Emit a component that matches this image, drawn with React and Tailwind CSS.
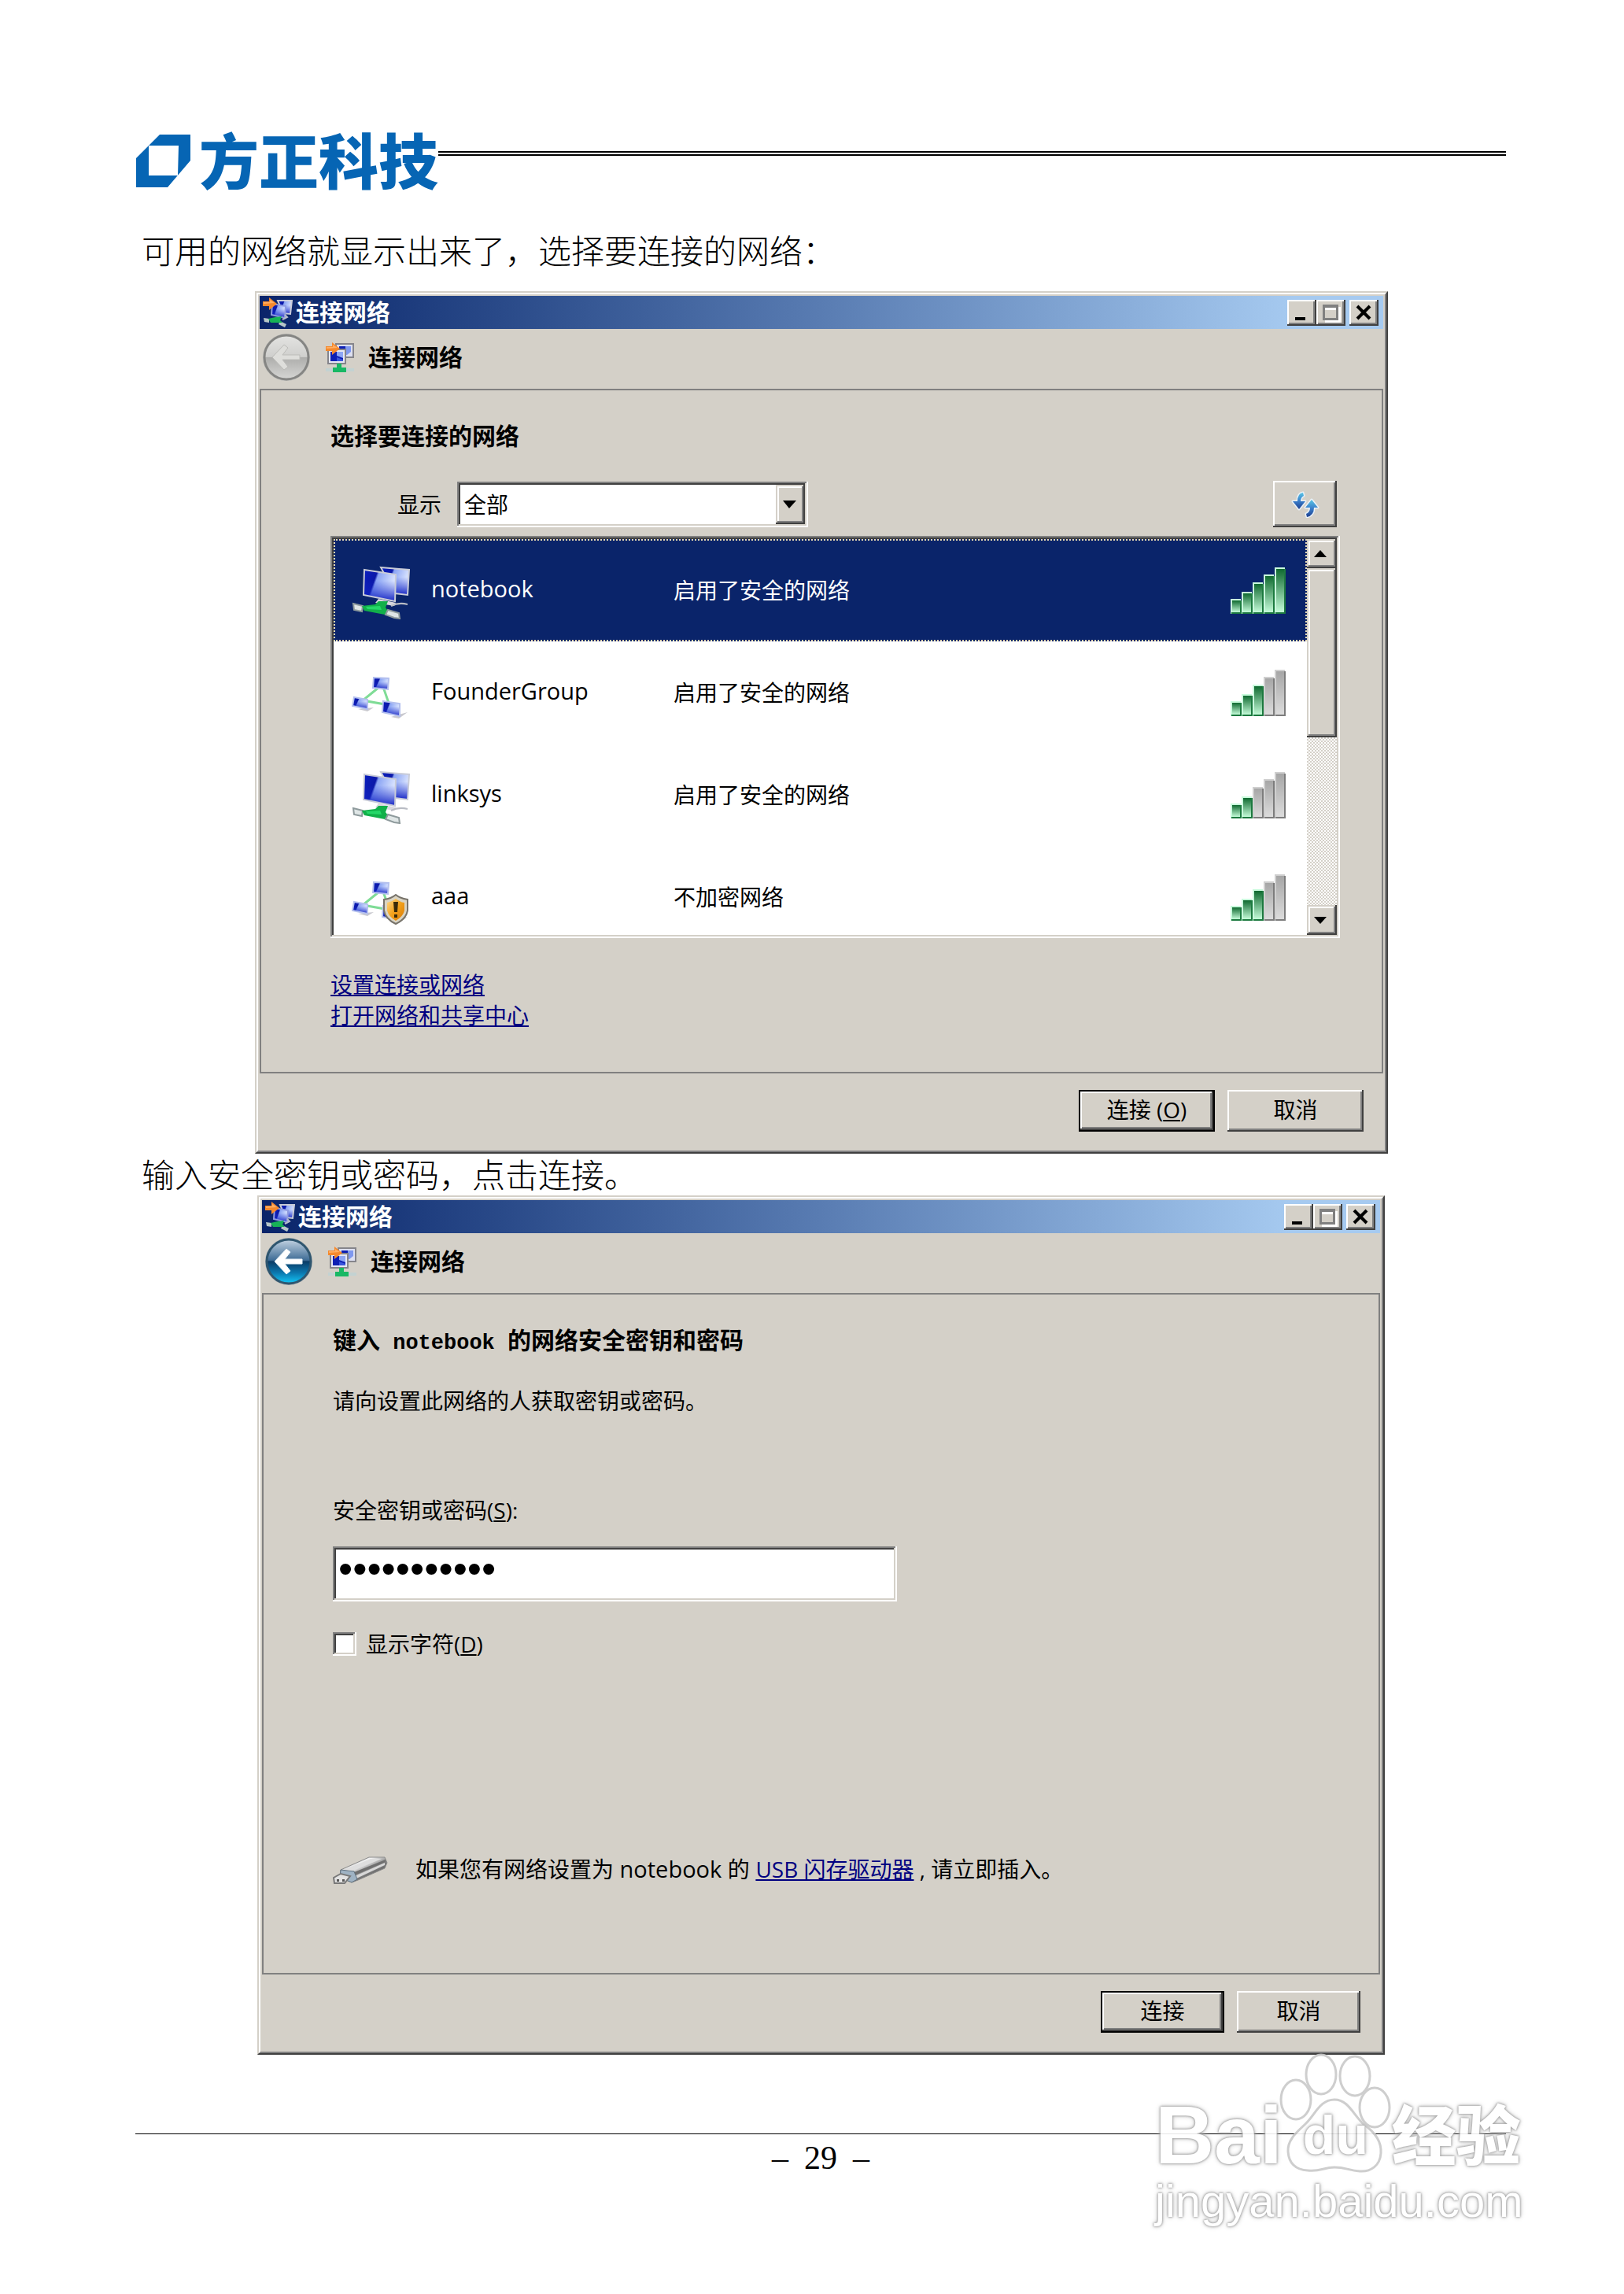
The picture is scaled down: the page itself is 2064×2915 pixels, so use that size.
import { useState } from "react";
import clsx from "clsx";

const RAISED =
  "bg-[#d4d0c8] shadow-[inset_-2px_-2px_0_#404040,inset_2px_2px_0_#fff,inset_-4px_-4px_0_#808080]";
const RAISED_SOFT =
  "bg-[#d4d0c8] shadow-[inset_-2px_-2px_0_#404040,inset_2px_2px_0_#d4d0c8,inset_-4px_-4px_0_#808080,inset_4px_4px_0_#fff]";
const SUNKEN =
  "bg-white shadow-[inset_-2px_-2px_0_#fff,inset_2px_2px_0_#808080,inset_-4px_-4px_0_#d4d0c8,inset_4px_4px_0_#404040]";

const networks = [
  { name: "notebook", security: "启用了安全的网络", icon: "infra", bars: 5 },
  { name: "FounderGroup", security: "启用了安全的网络", icon: "adhoc", bars: 3 },
  { name: "linksys", security: "启用了安全的网络", icon: "infra", bars: 2 },
  { name: "aaa", security: "不加密网络", icon: "adhoc-open", bars: 3 },
];

// Gradients shared by every icon on the page
const IconDefs = () => (
  <svg width="0" height="0" className="absolute" aria-hidden="true">
    <defs>
      <linearGradient id="screen" x1="0" y1="0" x2="1" y2="0.35">
        <stop offset="0" stopColor="#0a1fc0" />
        <stop offset="0.4" stopColor="#0b18a8" />
        <stop offset="0.46" stopColor="#8aa4f4" />
        <stop offset="1" stopColor="#dfe8ff" />
      </linearGradient>
      <linearGradient id="screenFade" x1="0" y1="0" x2="0" y2="1">
        <stop offset="0.35" stopColor="#1a2fd0" stopOpacity="0" />
        <stop offset="1" stopColor="#0c1cc0" stopOpacity="0.95" />
      </linearGradient>
      <linearGradient id="barOn" x1="0" y1="0" x2="0" y2="1">
        <stop offset="0" stopColor="#0f6a30" />
        <stop offset="1" stopColor="#c4fbd8" />
      </linearGradient>
      <linearGradient id="barOff" x1="0" y1="0" x2="0" y2="1">
        <stop offset="0" stopColor="#a6a6a6" />
        <stop offset="1" stopColor="#dcdcdc" />
      </linearGradient>
      <linearGradient id="backOff" x1="0" y1="0" x2="0" y2="1">
        <stop offset="0" stopColor="#e4e4e2" />
        <stop offset="0.49" stopColor="#cfcfcd" />
        <stop offset="0.5" stopColor="#adadab" />
        <stop offset="1" stopColor="#d6d6d4" />
      </linearGradient>
      <linearGradient id="backOn" x1="0" y1="0" x2="0" y2="1">
        <stop offset="0" stopColor="#c3d3e2" />
        <stop offset="0.47" stopColor="#3f6d96" />
        <stop offset="0.5" stopColor="#0b3c66" />
        <stop offset="0.75" stopColor="#0b76ad" />
        <stop offset="1" stopColor="#14c8f8" />
      </linearGradient>
      <linearGradient id="shield" x1="0" y1="0" x2="1" y2="1">
        <stop offset="0" stopColor="#ffd98a" />
        <stop offset="0.5" stopColor="#f2a11c" />
        <stop offset="1" stopColor="#d97a06" />
      </linearGradient>
      <linearGradient id="arrowBlue" x1="0" y1="0" x2="0" y2="1">
        <stop offset="0" stopColor="#58c4e4" />
        <stop offset="0.5" stopColor="#3a7fcb" />
        <stop offset="1" stopColor="#1d3f8f" />
      </linearGradient>
      <linearGradient id="metal" x1="0" y1="0" x2="1" y2="1">
        <stop offset="0" stopColor="#8d8d8d" />
        <stop offset="0.35" stopColor="#f4f4f4" />
        <stop offset="0.6" stopColor="#7a7a7a" />
        <stop offset="1" stopColor="#3f3f3f" />
      </linearGradient>
    </defs>
  </svg>
);

const Monitor = ({ points, frame = "#c9ccd8" }) => (
  <>
    <polygon points={points} fill="url(#screen)" />
    <polygon points={points} fill="url(#screenFade)" />
    <polygon points={points} fill="none" stroke={frame} strokeWidth="2" />
  </>
);

const InfraIcon = () => (
  <svg viewBox="0 0 74 74" className="w-[74px] h-[74px]" aria-hidden="true">
    <Monitor points="37,8 73,11 71,43 55,41" />
    <Monitor points="16,11 56,17 55,51 15,43" />
    <path d="M34 48 L56 53 L54 57 L30 53Z" fill="#d8d8de" />
    <path d="M50 57 Q60 52 71 55" stroke="#b9bcc4" strokeWidth="2" fill="none" />
    <path d="M2 54 L14 57 L13 64 L3 62Z" fill="#dfe6e6" stroke="#8e9a9c" strokeWidth="2" />
    <path d="M13 57 L30 55 L34 51 L46 51 L43 59 L46 63 L42 68 L16 63Z" fill="#12b04a" />
    <path d="M18 58 L36 57 L38 62 L20 61Z" fill="#25d868" />
    <path d="M46 62 L60 66 L61 73 L54 72 L43 68Z" fill="#dfe6e6" stroke="#8e9a9c" strokeWidth="2" />
  </svg>
);

const AdhocIcon = ({ open }) => (
  <svg viewBox="0 0 74 74" className="w-[74px] h-[74px]" aria-hidden="true">
    <path d="M35 30 L14 47 L48 53 L40 30" stroke="#7fdc96" strokeWidth="3" fill="none" />
    <path d="M8 58 L28 56 L20 61Z M50 68 L71 62 L60 70Z" fill="#c9c9cf" />
    <Monitor points="28,18 47,19 46,33 27,31" frame="#b4c0ee" />
    <Monitor points="3,43 20,46 20,58 1,54" frame="#b4c0ee" />
    <Monitor points="40,48 61,51 61,67 39,62" frame="#b4c0ee" />
    {open && (
      <g>
        <path
          d="M56 34 Q62 39 71 40 V54 Q69 65 56 71 Q43 65 41 54 V40 Q50 39 56 34Z"
          fill="#d9d4c4"
          stroke="#77736a"
          strokeWidth="2"
        />
        <path d="M56 39 Q61 43 67 44 V54 Q65 62 56 67 Q47 62 45 54 V44 Q51 43 56 39Z" fill="url(#shield)" />
        <path d="M53 43 H59 L58 56 H54Z M54 59 H58 V63 H54Z" fill="#3a2a08" />
      </g>
    )}
  </svg>
);

const ConnectIcon = ({ tilted }) => (
  <svg viewBox="0 0 38 38" className="w-[38px] h-[38px]" aria-hidden="true">
    {tilted ? (
      <>
        <Monitor points="19,4 37,4 35,21 26,20" />
        <Monitor points="12,8 29,11 28,26 11,22" frame="#8f9be0" />
        <path d="M28 22 L31 25 L25 28" stroke="#b7bccb" strokeWidth="2" fill="none" />
        <path d="M1 26 L8 27 L8 32 L2 31Z M22 30 L30 34 L28 38 L20 34Z" fill="#b7c6c8" />
        <path d="M7 27 L16 25 L24 24 L22 29 L25 32 L10 32Z" fill="#17b356" />
      </>
    ) : (
      <>
        <path d="M13 2 H35 V19 H13Z" fill="#dcdff0" stroke="#85858b" strokeWidth="2" />
        <path d="M17 5 H25 V16 H17Z" fill="#0d1fb4" />
        <path d="M25 5 H32 V12 L27 16 H25Z" fill="#7f98ee" />
        <path d="M3 9 H25 V27 H3Z" fill="#e6e8f4" stroke="#85858b" strokeWidth="2" />
        <path d="M6 12 H22 V24 H6Z" fill="#0d1fb4" />
        <path d="M14 12 H22 V20 L14 17Z" fill="#8ea6f4" />
        <path d="M14 19 L22 22 V24 H14Z" fill="#3a55dc" />
        <rect x="0" y="33" width="36" height="4" fill="#c3d2d2" />
        <path d="M14 27 H20 V32 H26 V38 H9 V32 H14Z" fill="#18b864" />
      </>
    )}
    <path d="M0 5 H8 V0 L18 8 L8 16 V11 H0Z" fill="#f5892d" />
    <path d="M1 6 H9 V3 L15 7 L1 8Z" fill="#ffae62" />
  </svg>
);

const BackIcon = ({ active }) => (
  <svg viewBox="0 0 62 62" className="w-[62px] h-[62px]" aria-hidden="true">
    <circle cx="31" cy="31" r="30" fill={active ? "#a9aeb0" : "#bdbdba"} />
    <circle
      cx="31"
      cy="31"
      r="28"
      fill={active ? "url(#backOn)" : "url(#backOff)"}
      stroke={active ? "#2f566f" : "#858583"}
      strokeWidth="3"
    />
    <path
      d="M28 15 L13 31 L28 47 L33 43 L26 34 H48 V28 H26 L33 19Z"
      fill={active ? "#fff" : "#dededb"}
      stroke={active ? "#e8f2f8" : "#bcbcb9"}
      strokeWidth="1"
      strokeLinejoin="round"
    />
  </svg>
);

const RefreshIcon = () => (
  <svg viewBox="0 0 36 34" className="w-9 h-[34px]" aria-hidden="true">
    <g stroke="#e9f1f8" strokeWidth="3" strokeLinejoin="round" paintOrder="stroke" fill="url(#arrowBlue)">
      <path d="M15 2 Q8 3 8 13 H2 L10 23 L18 13 H12 Q12 8 16 6Z" />
      <path d="M20 33 Q29 31 29 21 H34 L26 11 L18 21 H24 Q24 27 19 29Z" />
    </g>
  </svg>
);

const UsbIcon = () => (
  <svg viewBox="0 0 70 36" className="w-[70px] h-9" aria-hidden="true">
    <path d="M10 17 L46 1 L66 1 L69 8 L66 15 L32 30 L24 33 L9 25Z" fill="url(#metal)" stroke="#8a8a8a" />
    <path d="M14 17 L48 3 L62 3 L26 18Z" fill="#dedede" />
    <path d="M27 20 L67 4 L67 7 L28 24Z" fill="#6f6f6f" />
    <path d="M28 25 L66 8 L66 11 L30 28Z" fill="#d8d8d8" />
    <path d="M10 17 L27 19 L31 29 L24 33 L9 27Z" fill="#9fb3c4" stroke="#5e6f7d" />
    <path d="M1 27 L10 22 L22 25 L15 34 L2 34Z" fill="#e2e2e2" stroke="#787878" strokeWidth="2" />
    <path d="M5 29 h3 v3 h-3z M12 29 h3 v3 h-3z" fill="#555" />
  </svg>
);

const SignalBars = ({ level }) => (
  <svg viewBox="0 0 70 60" className="w-[70px] h-[60px]" role="img" aria-label={`${level}/5`}>
    {[19, 28, 40, 50, 59].map((h, i) => {
      const on = i < level;
      return (
        <g key={h}>
          <rect x={i * 14} y={60 - h} width="13" height={h} fill={on ? "#c8fbdc" : "#cfcfcf"} />
          <rect x={i * 14 + 2} y={62 - h} width="10" height={h - 4} fill={on ? "url(#barOn)" : "url(#barOff)"} />
          <path
            d={`M${i * 14 + 13} ${62 - h} V59 H${i * 14 + 1}`}
            stroke={on ? "#1d7a40" : "#7d7d7d"}
            strokeWidth="2"
            fill="none"
          />
        </g>
      );
    })}
  </svg>
);

const CaptionButton = ({ label, children }) => (
  <button type="button" aria-label={label} className={clsx("w-[37px] h-[33px]", RAISED)}>
    <svg viewBox="0 0 37 33" className="w-[37px] h-[33px]">
      {children}
    </svg>
  </button>
);

const Dialog = ({ className, canGoBack, footer, children }) => (
  <section className={clsx("border-2 border-[#d4d0c8] border-r-[#404040] border-b-[#404040] bg-[#d4d0c8]", className)}>
    <div className="border-2 border-white border-r-[#808080] border-b-[#808080] p-0.5">
      <div className="flex items-center h-[42px] pl-1 pr-1.5 bg-linear-to-r from-[#0a246a] to-[#a6caf0] to-92%">
        <ConnectIcon tilted />
        <h2 className="ml-1 flex-1 text-[30px] leading-10 font-bold text-white">连接网络</h2>
        <CaptionButton label="最小化">
          <path d="M10 22 H23 V26 H10Z" fill="#000" />
        </CaptionButton>
        <CaptionButton label="最大化">
          <path d="M11 9 H31 V29 H11Z" fill="#fff" />
          <path d="M8 6 H28 V26 H8Z M11 10 V23 H25 V10Z" fill="#808080" fillRule="evenodd" />
          <path d="M11 13 H25 V23 H11Z" fill="#d4d0c8" />
        </CaptionButton>
        <div className="w-[5px]" />
        <CaptionButton label="关闭">
          <path d="M10 8 L26 24 M26 8 L10 24" stroke="#000" strokeWidth="4" />
        </CaptionButton>
      </div>
      <div className="flex items-center h-[76px] pl-[3px] pb-1">
        <button type="button" aria-label="后退" disabled={!canGoBack}>
          <BackIcon active={canGoBack} />
        </button>
        <div className="ml-[19px]">
          <ConnectIcon />
        </div>
        <h3 className="ml-4 text-[30px] leading-10 font-bold">连接网络</h3>
      </div>
      <div className="border-2 border-[#808080] pl-[88px] pr-[53px]">{children}</div>
      <div className="flex justify-end gap-4 pt-[21px] pb-[22px] pr-[25px]">{footer}</div>
    </div>
  </section>
);

const PushButton = ({ primary, className, children }) => (
  <button
    type="button"
    className={clsx("h-[53px] pb-1 text-[28px] leading-10", RAISED, primary && "border-2 border-black", className)}
  >
    {children}
  </button>
);

const NetworkList = () => {
  const [selected, setSelected] = useState("notebook");

  return (
    <div className={clsx("mt-[11px] flex h-[511px] p-1", SUNKEN)}>
      <ul role="listbox" aria-label="网络" className="flex-1 overflow-hidden">
        {networks.map((network) => (
          <li
            key={network.name}
            role="option"
            aria-selected={selected === network.name}
            onClick={() => setSelected(network.name)}
            className={clsx(
              "flex items-center h-[130px] border-2 pl-[21px] pr-[25px] text-[28px] leading-10",
              selected === network.name
                ? "border-dotted border-[#e8dcb4] bg-[#0a246a] text-white"
                : "border-transparent"
            )}
          >
            {network.icon === "infra" ? <InfraIcon /> : <AdhocIcon open={network.icon === "adhoc-open"} />}
            <span className="ml-[27px] w-[308px] pb-1 text-[29px]">{network.name}</span>
            <span className="flex-1">{network.security}</span>
            <SignalBars level={network.bars} />
          </li>
        ))}
      </ul>
      <div className="flex flex-col w-[38px] bg-[repeating-conic-gradient(#d4d0c8_0_25%,#fff_0_50%)] bg-[length:4px_4px]">
        <button type="button" aria-label="向上" className={clsx("h-[37px]", RAISED_SOFT)}>
          <svg viewBox="0 0 38 37" className="w-[38px] h-[37px]">
            <path d="M9 23 L17 14 L25 23Z" />
          </svg>
        </button>
        <div className={clsx("h-[215px]", RAISED_SOFT)} />
        <div className="flex-1" />
        <button type="button" aria-label="向下" className={clsx("h-[38px]", RAISED_SOFT)}>
          <svg viewBox="0 0 38 37" className="w-[38px] h-[37px]">
            <path d="M9 14 L17 23 L25 14Z" />
          </svg>
        </button>
      </div>
    </div>
  );
};

const Watermark = () => (
  <div className="absolute right-[122px] bottom-[89px] w-[474px] font-['Liberation_Sans','Noto_Sans_CJK_SC',sans-serif] text-white opacity-90 [text-shadow:0_0_3px_#999,0_0_3px_#999,0_0_6px_#bbb]">
    <div className="flex items-end h-[156px]">
      <span className="text-[104px] leading-[110px] font-bold">Bai</span>
      <div className="relative w-[143px] h-[154px] -ml-1 mb-1">
        <svg viewBox="0 0 143 154" className="w-full h-full overflow-visible" aria-hidden="true">
          <g fill="#fff" stroke="#c9c9c9" strokeWidth="3">
            <ellipse cx="21" cy="58" rx="19" ry="25" />
            <ellipse cx="53" cy="26" rx="19" ry="25" />
            <ellipse cx="96" cy="28" rx="19" ry="25" />
            <ellipse cx="121" cy="68" rx="19" ry="25" />
            <path d="M70 58 C88 58 94 78 108 90 C122 100 130 112 129 126 C128 142 116 150 102 149 C88 148 84 144 70 144 C56 144 52 150 36 148 C20 147 12 138 11 124 C10 108 24 98 34 88 C46 76 52 58 70 58Z" />
          </g>
        </svg>
        <span className="absolute left-[30px] top-[68px] text-[68px] leading-[70px] font-bold">du</span>
      </div>
      <span className="text-[82px] leading-[104px] font-black">经验</span>
    </div>
    <div className="text-[58px] leading-[58px]">jingyan.baidu.com</div>
  </div>
);

const App = () => {
  const [password, setPassword] = useState("12345678901");
  const [showChars, setShowChars] = useState(false);

  return (
    <div className="relative min-h-screen bg-white text-black pt-[170px] pb-[146px] pl-[172px] pr-[150px] font-['Open_Sans','Noto_Sans_CJK_SC',sans-serif]">
      <IconDefs />
      <header className="flex items-start h-[69px] text-[#0665b4]">
        <svg viewBox="0 0 72 69" className="w-[72px] h-[69px]" role="img" aria-label="Founder">
          <path
            d="M31 1 H70 V34 L41 68 H1 V31Z M17 15 V53 H54 L55 15Z"
            fill="currentColor"
            fillRule="evenodd"
          />
        </svg>
        <h1 className="ml-[9px] text-[76px] leading-[69px] font-black">方正科技</h1>
        <div className="mt-[22px] flex-1 h-1.5 border-y-2 border-black" />
      </header>

      <main>
        <p className="mt-[53px] pl-2 text-[42px] leading-[53px] font-light">
          可用的网络就显示出来了，选择要连接的网络：
        </p>

        <Dialog
          className="mt-[25px] ml-[152px] mr-[150px]"
          canGoBack={false}
          footer={
            <>
              <PushButton primary className="w-[173px]">
                连接 (<u>O</u>)
              </PushButton>
              <PushButton className="w-[173px]">取消</PushButton>
            </>
          }
        >
          <h4 className="pt-[38px] text-[30px] leading-10 font-bold">选择要连接的网络</h4>
          <div className="mt-[37px] flex items-center pl-[85px] pr-1">
            <label htmlFor="filter" className="text-[28px] leading-10">
              显示
            </label>
            <div className="relative ml-5 w-[446px]">
              <select
                id="filter"
                className={clsx("w-full h-[58px] appearance-none pl-[9px] text-[28px] leading-10", SUNKEN)}
              >
                <option>全部</option>
              </select>
              <svg
                viewBox="0 0 37 50"
                className={clsx("absolute right-1 top-1 w-[37px] h-[50px] pointer-events-none", RAISED_SOFT)}
                aria-hidden="true"
              >
                <path d="M9 20 H26 L17 30Z" />
              </svg>
            </div>
            <button
              type="button"
              aria-label="刷新"
              className={clsx("ml-auto w-[81px] h-[59px] flex items-center justify-center", RAISED)}
            >
              <RefreshIcon />
            </button>
          </div>
          <NetworkList />
          <div className="mt-10 pb-[52px] flex flex-col items-start text-[28px] leading-[39px] text-[#000080] underline">
            <a href="#setup">设置连接或网络</a>
            <a href="#center">打开网络和共享中心</a>
          </div>
        </Dialog>

        <p className="pl-2 text-[42px] leading-[53px] font-light">输入安全密钥或密码，点击连接。</p>

        <Dialog
          className="ml-[155px] mr-[154px]"
          canGoBack
          footer={
            <>
              <PushButton primary className="w-[157px]">
                连接
              </PushButton>
              <PushButton className="w-[157px]">取消</PushButton>
            </>
          }
        >
          <h4 className="pt-[38px] text-[30px] leading-10 font-bold">
            键入
            <span className="font-['Liberation_Mono',monospace] text-[27px] leading-none"> notebook </span>
            的网络安全密钥和密码
          </h4>
          <p className="mt-[37px] text-[28px] leading-10">请向设置此网络的人获取密钥或密码。</p>
          <label htmlFor="key" className="mt-[99px] block text-[28px] leading-10">
            安全密钥或密码(<u>S</u>):
          </label>
          <input
            id="key"
            type={showChars ? "text" : "password"}
            value={password}
            onChange={(e) => setPassword(e.target.value)}
            className={clsx(
              "mt-[26px] block w-[717px] h-[70px] pl-[7px] pb-[14px] font-['Liberation_Sans',sans-serif] text-[52px] leading-[56px]",
              SUNKEN
            )}
          />
          <div className="mt-[34px] flex items-center text-[28px] leading-10">
            <input
              id="show"
              type="checkbox"
              checked={showChars}
              onChange={(e) => setShowChars(e.target.checked)}
              className={clsx("w-[30px] h-[30px] appearance-none", SUNKEN)}
            />
            <label htmlFor="show" className="ml-3">
              显示字符(<u>D</u>)
            </label>
          </div>
          <div className="mt-[248px] mb-[110px] flex items-center h-10 text-[28px] leading-10">
            <UsbIcon />
            <p className="ml-[35px] pb-1">
              如果您有网络设置为<span className="text-[29px] leading-none"> notebook </span>的
              <span className="text-[29px] leading-none"> </span>
              <a href="#usb" className="text-[#000080] underline">
                USB 闪存驱动器
              </a>{" "}
              , 请立即插入。
            </p>
          </div>
        </Dialog>
      </main>

      <footer className="mt-[100px] flex justify-center gap-5 border-t border-black pt-1 font-['Liberation_Serif',serif] text-[42px] leading-[53px]">
        <span>–</span>
        <span>29</span>
        <span>–</span>
      </footer>
      <Watermark />
    </div>
  );
};

export default App;
